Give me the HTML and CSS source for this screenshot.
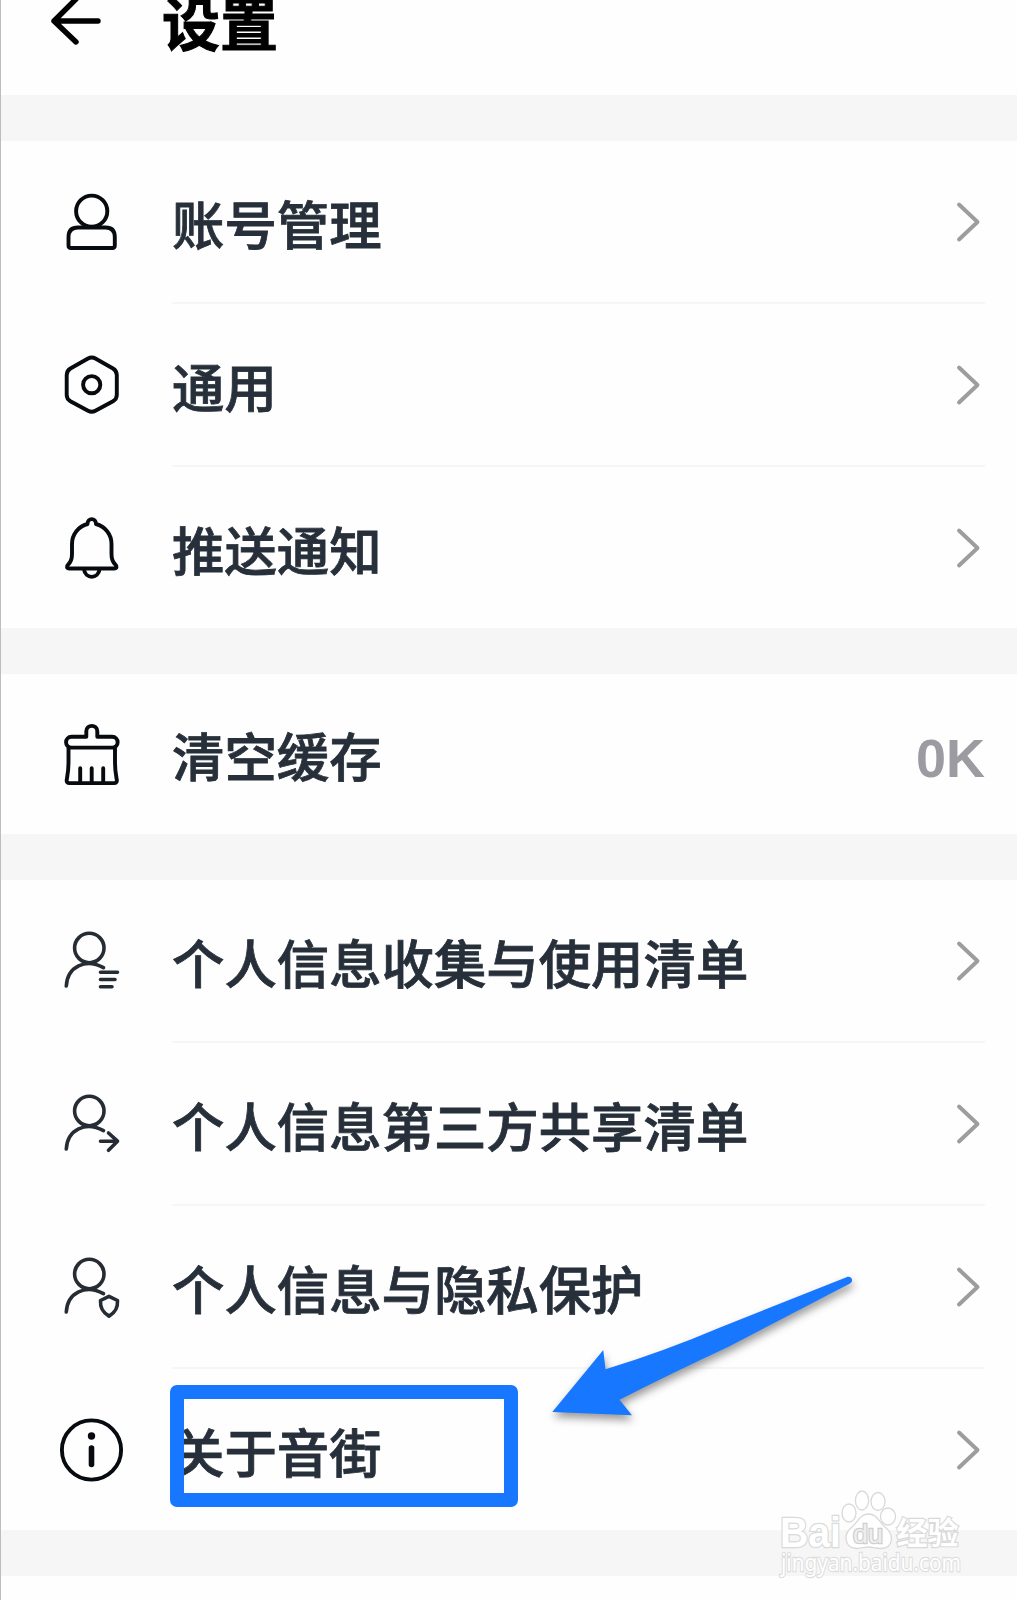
FILE: index.html
```html
<!DOCTYPE html>
<html lang="zh-CN">
<head>
<meta charset="utf-8">
<title>设置</title>
<link rel="stylesheet" href="styles.css">
</head>
<body>
<main class="screen">
  <header class="header">
    <svg class="back" viewBox="0 0 56 50"><path d="M27 -1 5 21 27 42M5 21H49"/></svg>
    <h1 class="title">设置</h1>
  </header>

  <section class="group">
    <div class="row">
      <svg class="icon" viewBox="0 0 80 80"><circle cx="39.7" cy="29.2" r="15.6"/><path d="M26 45.500H53.500Q62.800 45.500 62.800 55V63.500Q62.800 66 60.300 66H19Q16.500 66 16.500 63.500V55Q16.500 45.500 26 45.500Z"/></svg>
      <div class="cell"><span class="label">账号管理</span><svg class="chevron" viewBox="0 0 24 42"><path d="M4 3.500 22.500 21 4 38.500"/></svg></div>
    </div>
    <div class="row">
      <svg class="icon" viewBox="0 0 80 80"><path d="M36 13.500Q39.700 11.500 43.400 13.500L61 23.500Q64.800 25.800 64.800 30V50Q64.800 54 61 56.200L43.400 65.800Q39.700 67.800 36 65.800L18.400 56.200Q14.700 54 14.700 50V30Q14.700 25.800 18.400 23.500Z"/><circle cx="39.700" cy="39.700" r="8.600"/></svg>
      <div class="cell"><span class="label">通用</span><svg class="chevron" viewBox="0 0 24 42"><path d="M4 3.500 22.500 21 4 38.500"/></svg></div>
    </div>
    <div class="row">
      <svg class="icon" viewBox="0 0 80 80"><path d="M35.500 16C35.500 9.500 44 9.500 44 16C53 18.500 59.500 26 59.500 36V46C59.500 51.500 60.500 54 63.300 56.500C65.500 58.500 64.800 60.500 62 60.500H17.500C14.700 60.500 14 58.500 16.200 56.500C19 54 20 51.500 20 46V36C20 26 26.500 18.500 35.500 16ZM31.800 61C33.500 71.500 46 71.500 47.700 61"/></svg>
      <div class="cell"><span class="label">推送通知</span><svg class="chevron" viewBox="0 0 24 42"><path d="M4 3.500 22.500 21 4 38.500"/></svg></div>
    </div>
  </section>

  <section class="group single">
    <div class="row">
      <svg class="icon" viewBox="0 1.2 80 80"><path d="M34.300 23V17.500C34.300 10.200 45.300 10.200 45.300 17.500V23H60C67.500 23 67.500 33.800 60 33.800H19.700C12.200 33.800 12.200 23 19.700 23ZM16.500 33.800V49C16.500 57 15.800 60 14.700 66Q14.300 69.300 17.500 69.300H62Q65.200 69.300 64.800 66C63.700 60 63 57 63 49V33.800M28.200 54.500V69M39.700 54.500V69M51.200 54.500V69"/></svg>
      <div class="cell"><span class="label">清空缓存</span><span class="value">0K</span></div>
    </div>
  </section>

  <section class="group">
    <div class="row">
      <svg class="icon soft" viewBox="0 -0.5 80 80"><circle cx="37.300" cy="26.500" r="14.700"/><path d="M14.300 64.500C15.500 45 33.500 36.500 51.500 46.200M48.500 50.800H65.500M48.500 58H63M48.500 65.300H60"/></svg>
      <div class="cell"><span class="label">个人信息收集与使用清单</span><svg class="chevron" viewBox="0 0 24 42"><path d="M4 3.500 22.500 21 4 38.500"/></svg></div>
    </div>
    <div class="row">
      <svg class="icon soft" viewBox="0 -0.5 80 80"><circle cx="37.300" cy="26.500" r="14.700"/><path d="M14.300 64.500C15.500 45 33.500 36.500 51.500 46.200M48.500 56.700H65.500M56.500 48.500 65.500 56.700 56.500 65.800"/></svg>
      <div class="cell"><span class="label">个人信息第三方共享清单</span><svg class="chevron" viewBox="0 0 24 42"><path d="M4 3.500 22.500 21 4 38.500"/></svg></div>
    </div>
    <div class="row">
      <svg class="icon soft" viewBox="0 -0.5 80 80"><circle cx="37.300" cy="26.500" r="14.700"/><path d="M14.300 64.500C15.500 45 33.500 36.500 51.500 46.200M57 48.800 65.500 53C66 61 63 65 57 68.600C51 65 48 61 48.500 53Z"/></svg>
      <div class="cell"><span class="label">个人信息与隐私保护</span><svg class="chevron" viewBox="0 0 24 42"><path d="M4 3.500 22.500 21 4 38.500"/></svg></div>
    </div>
    <div class="row">
      <svg class="icon" viewBox="0 0 80 80"><circle cx="39.500" cy="40" r="29.600"/><circle class="dot" cx="39.500" cy="26" r="3.700"/><path class="stem" d="M39.500 38V54.500"/></svg>
      <div class="cell"><span class="label">关于音街</span><svg class="chevron" viewBox="0 0 24 42"><path d="M4 3.500 22.500 21 4 38.500"/></svg></div>
    </div>
  </section>

  <div class="highlight"></div>
  <svg class="pointer" viewBox="540 1260 330 180"><path d="M552.300 1412 603.300 1350 605.500 1369.300Q665 1351 720 1327.500L846.500 1277.200C851 1275.500 854.500 1280.500 850 1283.500L728 1347Q670 1374 619.500 1399.700L632 1415.300Z"/></svg>
  <svg class="watermark" viewBox="770 1480 200 110">
    <text class="wm-bold" x="780" y="1547" font-size="42" textLength="61" lengthAdjust="spacingAndGlyphs">Bai</text>
    <ellipse cx="849" cy="1513" rx="7" ry="9"/><ellipse cx="862" cy="1500.500" rx="6.600" ry="9.500"/><ellipse cx="878" cy="1501.500" rx="7" ry="9"/><ellipse cx="888" cy="1516.500" rx="7.500" ry="8.500"/>
    <path d="M868.500 1514C877 1514 879 1522 885 1527C895 1535 893 1548 881 1548.500C875 1548.500 873 1547 868.500 1547C864 1547 862 1548.500 857 1548.500C845 1548 842 1535 852 1527C858 1522 860 1514 868.500 1514Z"/>
    <text class="wm-du" x="853" y="1543" font-size="25" textLength="30" lengthAdjust="spacingAndGlyphs">du</text>
    <text class="wm-cjk" x="896.500" y="1543.500" font-size="31">经验</text>
    <text class="wm-url" x="781" y="1571" font-size="24" textLength="180" lengthAdjust="spacingAndGlyphs">jingyan.baidu.com</text>
  </svg>
</main>
</body>
</html>
```
FILE: styles.css
```css
* { box-sizing: border-box; }

body {
  margin: 0;
  background: #fefefe;
  font-family: "Noto Sans CJK SC", sans-serif;
}

.screen {
  position: relative;
  width: 1017px;
  height: 1600px;
  overflow: hidden;
  border-left: 1px solid #bdbdbd;
}

.header {
  display: flex;
  align-items: flex-start;
  gap: 57px;
  height: 95px;
  padding-left: 48px;
}

.back {
  width: 56px;
  height: 50px;
  fill: none;
  stroke: #000;
  stroke-width: 5.4;
  stroke-linecap: round;
  stroke-linejoin: round;
}

.title {
  margin: -9px 0 0;
  font-size: 58px;
  font-weight: 700;
  line-height: 60px;
  color: #000;
  -webkit-text-stroke: 1px #000;
}

.group { border-top: 46px solid #f6f6f6; }

.group:last-of-type { border-bottom: 46px solid #f6f6f6; }

.row {
  display: flex;
  gap: 40px;
  height: 163px;
  padding: 0 32px 0 51px;
}

.row:last-child { height: 161px; }

.single .row:last-child { height: 160px; }

.icon {
  flex: none;
  width: 80px;
  height: 80px;
  margin-top: 41px;
  fill: none;
  stroke: #070b0f;
  stroke-width: 3.9;
  stroke-linecap: round;
  stroke-linejoin: round;
}

.soft {
  stroke: #262c33;
  stroke-width: 3.6;
}

.icon .dot {
  fill: #070b0f;
  stroke: none;
}

.icon .stem { stroke-width: 5.6; }

.cell {
  flex: 1;
  display: flex;
  align-items: center;
  justify-content: space-between;
  border-bottom: 2px solid #f6f6f6;
}

.row:last-child .cell { border-bottom: 0; }

.label {
  font-size: 52.4px;
  font-weight: 500;
  line-height: 60px;
  color: #27303a;
  -webkit-text-stroke: .8px #27303a;
}

.chevron {
  width: 24px;
  height: 42px;
  margin-right: 6px;
  overflow: visible;
  fill: none;
  stroke: #9d9da0;
  stroke-width: 3.9;
  stroke-linecap: round;
  stroke-linejoin: round;
}

.value {
  margin-top: 7px;
  font: 700 54px/60px "Liberation Sans", sans-serif;
  color: #9c9ba1;
}

.highlight {
  position: absolute;
  left: 168.5px;
  top: 1385px;
  width: 348px;
  height: 122px;
  border: 14.4px solid #1877ff;
  border-radius: 7px;
}

.pointer {
  position: absolute;
  left: 539px;
  top: 1260px;
  width: 330px;
  height: 180px;
  fill: #1877ff;
  filter: drop-shadow(1px 5px 4px rgba(0, 0, 0, .4));
}

.watermark {
  position: absolute;
  left: 769px;
  top: 1480px;
  width: 200px;
  height: 110px;
  fill: #fff;
  stroke: #d9d9d9;
  stroke-width: 1.3;
}

.watermark text { paint-order: stroke; stroke-width: 2.4; }

.wm-bold { font-family: "Liberation Sans", sans-serif; font-weight: 700; }

.watermark .wm-du {
  font-family: "Liberation Sans", sans-serif;
  font-weight: 400;
  fill: #eee;
  stroke: #cfcfcf;
}

.wm-cjk { font-weight: 700; }

.watermark .wm-url {
  font-family: "Noto Sans", sans-serif;
  font-weight: 400;
  stroke: #dedede;
}
```
